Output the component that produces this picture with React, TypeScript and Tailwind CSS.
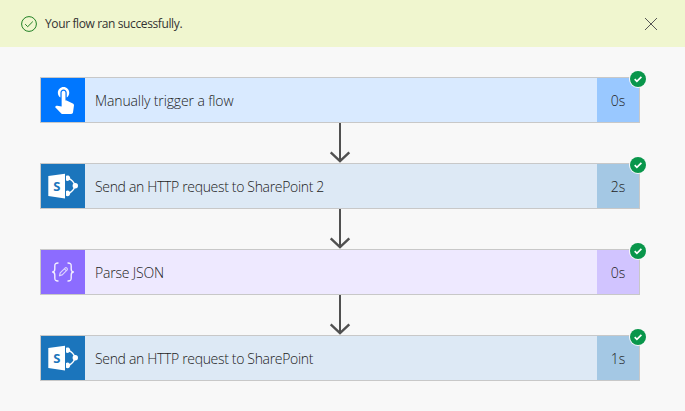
import { Fragment } from "react";

function TouchIcon() {
  return (
    <svg width="19" height="27" viewBox="4.75 3 15 21" preserveAspectRatio="none" fill="#fff" className="mt-px ml-[2px]">
      <path d="M9 11.24V7.5C9 6.12 10.12 5 11.5 5S14 6.12 14 7.5v3.74c1.21-.81 2-2.18 2-3.74C16 5.01 13.99 3 11.5 3S7 5.01 7 7.5c0 1.56.79 2.93 2 3.74zm9.84 4.63l-4.54-2.26c-.17-.07-.35-.11-.54-.11H13v-6c0-.83-.67-1.5-1.5-1.5S10 6.67 10 7.5v10.74l-3.43-.72c-.08-.01-.15-.03-.24-.03-.31 0-.59.13-.79.33l-.79.8 4.94 4.94c.27.27.65.44 1.06.44h6.79c.75 0 1.33-.55 1.44-1.28l.75-5.27c.01-.07.02-.14.02-.2 0-.62-.38-1.16-.91-1.38z" />
    </svg>
  );
}

function SharePointIcon() {
  return (
    <svg width="44" height="44" viewBox="0 0 44 44" fill="#fff">
      <path d="M7.3 12 24 9.7V34.5L7.3 31.9Z" />
      <path d="M27.5 14.3C30.8 15.6 33 18 34.2 21.8 33 25.6 30.8 28 27.5 29.3" fill="none" stroke="#fff" strokeWidth="1.3" />
      <path d="M25 11.8A2.8 2.8 0 1 1 26.6 17L25 16.6ZM25 27A2.8 2.8 0 1 1 25 31.8Z" />
      <circle cx="34.3" cy="21.8" r="2.7" />
      <text x="15.8" y="26.6" textAnchor="middle" fill="#1b75bc" fontSize="13" fontWeight="700" fontFamily="'Open Sans', sans-serif">S</text>
    </svg>
  );
}

function JsonIcon() {
  return (
    <svg width="44" height="44" viewBox="0 0 44 44" fill="none" stroke="#f3efff" strokeLinecap="round" strokeLinejoin="round">
      <path d="M17 13C14.2 13 13.8 13.8 13.8 16V19C13.8 21 13.2 21.8 11.6 22C13.2 22.2 13.8 23 13.8 25V28C13.8 30.2 14.2 31 17 31M27 13C29.8 13 30.2 13.8 30.2 16V19C30.2 21 30.8 21.8 32.4 22C30.8 22.2 30.2 23 30.2 25V28C30.2 30.2 29.8 31 27 31" strokeWidth="1.4" />
      <path d="M18.5 25.8 19.2 22.9 24.3 17.8Q25.1 17.3 25.9 18.1 26.8 19 26.2 19.8L21.2 24.9ZM23.4 18.8 25.2 20.6" strokeWidth="1.2" stroke="#dcd2ff" />
    </svg>
  );
}

function Badge() {
  return (
    <svg width="18" height="18" viewBox="0 0 18 18" className="absolute -top-[8px] -right-[8px]">
      <circle cx="9" cy="9" r="9" fill="#f8f8f8" />
      <circle cx="9" cy="9" r="8" fill="#09964b" />
      <path d="m5.7 9.2 2.2 2.2 4.5-4.5" fill="none" stroke="#fff" strokeWidth="1.7" />
    </svg>
  );
}

function Arrow() {
  return (
    <svg width="24" height="40" viewBox="0 0 24 40" fill="none" stroke="#505050" strokeWidth="2" className="self-center">
      <path d="M12 0V38" />
      <path d="M2.7 29.3 12 38.2 21.3 29.3" strokeWidth="2.4" />
    </svg>
  );
}

const steps = [
  { title: "Manually trigger a flow", time: "0s", icon: TouchIcon, iconBg: "bg-[#0077ff]", bg: "bg-[#d9eaff]", timeBg: "bg-[#99c8ff]", tracking: "tracking-[-0.12px]" },
  { title: "Send an HTTP request to SharePoint 2", time: "2s", icon: SharePointIcon, iconBg: "bg-[#1b75bc]", bg: "bg-[#dde9f5]", timeBg: "bg-[#a4c8e4]", tracking: "tracking-[-0.33px]" },
  { title: "Parse JSON", time: "0s", icon: JsonIcon, iconBg: "bg-[#8c6cff]", bg: "bg-[#eee9ff]", timeBg: "bg-[#d1c4ff]", tracking: "tracking-[-0.2px]" },
  { title: "Send an HTTP request to SharePoint", time: "1s", icon: SharePointIcon, iconBg: "bg-[#1b75bc]", bg: "bg-[#dde9f5]", timeBg: "bg-[#a4c8e4]", tracking: "tracking-[-0.33px]" },
];

export default function App() {
  return (
    <div className="flex h-[411px] w-[685px] flex-col overflow-hidden bg-[#f8f8f8] font-['Open_Sans',sans-serif] text-[#222]">
      <header className="flex h-[47px] shrink-0 items-center bg-[#f0f6cf] pr-[27px] pl-[21px]">
        <svg width="16" height="16" viewBox="0 0 16 16" fill="none" stroke="#208024" strokeWidth="1">
          <circle cx="8" cy="8" r="7.4" />
          <path d="m4.2 8.2 2.5 2.5 5.1-5.1" />
        </svg>
        <span className="ml-2 text-[12px] leading-5 tracking-[-0.38px] whitespace-nowrap text-[#333]">Your flow ran successfully.</span>
        <svg width="14" height="14" viewBox="0 0 14 14" stroke="#555" strokeWidth="1" className="ml-auto">
          <path d="m1 1 12 12M13 1 1 13" />
        </svg>
      </header>
      <main className="flex w-[680px] flex-col px-10 pt-[30px]">
        {steps.map((s, i) => (
          <Fragment key={s.title}>
            {i > 0 && <Arrow />}
            <section className={`relative flex h-[46px] w-[600px] border border-[#c8c8c8] ${s.bg}`}>
              <div className={`flex w-11 shrink-0 items-center justify-center ${s.iconBg}`}>
                <s.icon />
              </div>
              <span className={`flex-1 self-center pt-px pl-2.5 text-[14px] leading-5 font-light whitespace-nowrap ${s.tracking}`}>{s.title}</span>
              <div className={`flex w-[42px] items-center justify-center text-[14px] font-light ${s.timeBg}`}>{s.time}</div>
              <Badge />
            </section>
          </Fragment>
        ))}
      </main>
    </div>
  );
}
